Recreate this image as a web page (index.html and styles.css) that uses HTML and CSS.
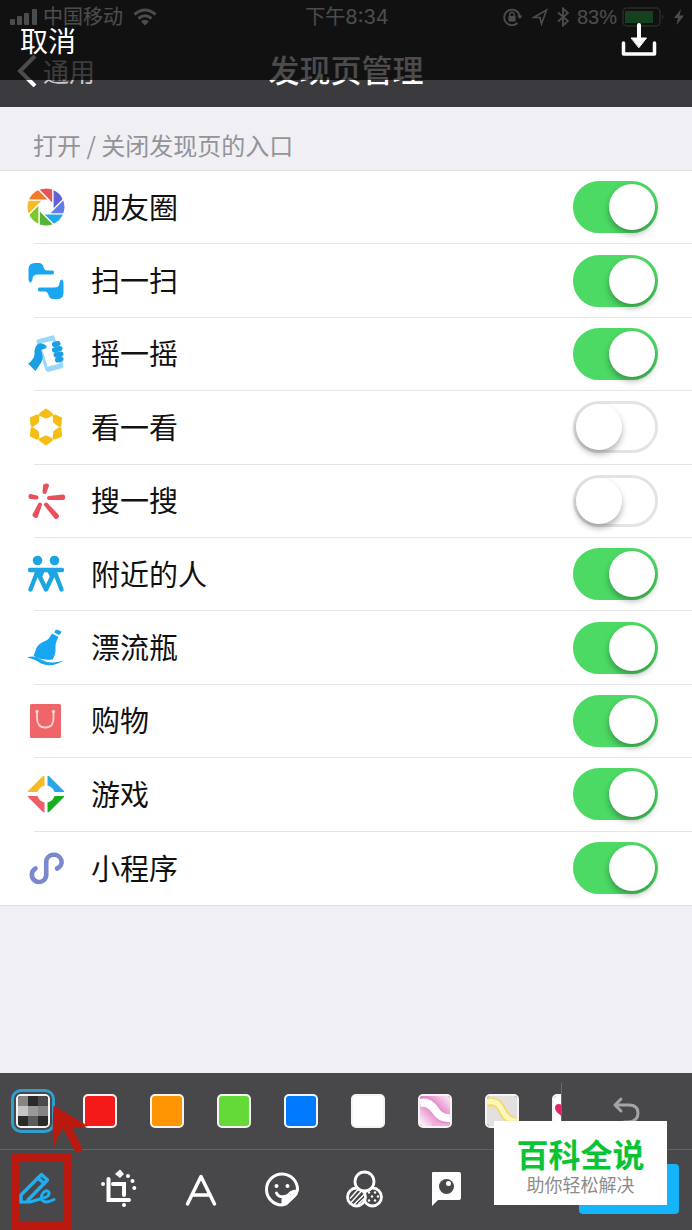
FILE: index.html
```html
<!DOCTYPE html>
<html lang="zh-CN">
<head>
    <meta charset="UTF-8">
    <meta name="viewport" content="width=device-width, initial-scale=1.0">
    <title>发现页管理</title>
    <link rel="stylesheet" href="styles.css">
</head>
<body>
    <header class="header">
        <!-- Status bar -->
        <div class="status">
            <div class="status-left">
                <svg width="27" height="18" viewBox="0 0 27 18" fill="#fff">
                    <rect x="0" y="11" width="5" height="6" rx="1"/>
                    <rect x="7" y="8" width="5" height="9" rx="1"/>
                    <rect x="14" y="5" width="5" height="12" rx="1"/>
                    <rect x="22" y="1" width="5" height="16" rx="1"/>
                </svg>
                <span>中国移动</span>
                <svg class="wifi" width="24" height="18" viewBox="0 0 24 18" fill="none" stroke="#fff" stroke-width="3">
                    <path d="M1.5 6.5Q12-2.500 22.500 6.500M5.500 10.500Q12 5 18.500 10.500"/>
                    <path d="M8 13.500Q12 10 16 13.500L12 17.500Z" fill="#fff" stroke="none"/>
                </svg>
            </div>
            <span class="time">下午8:34</span>
            <div class="status-right">
                <svg width="20" height="18" viewBox="0 0 20 18" fill="none" stroke="#fff" stroke-width="1.800">
                    <path d="M14.500 15A7.800 7.800 0 1 1 16.700 8"/>
                    <path d="M14 7.500h5.500L17 11Z" fill="#fff" stroke="none"/>
                    <rect x="5.500" y="8" width="7" height="5.500" fill="#fff" stroke="none"/>
                    <path d="M6.800 8V6.500a2.200 2.200 0 0 1 4.400 0V8" stroke-width="1.400"/>
                </svg>
                <svg width="16" height="18" viewBox="0 0 16 18" fill="none" stroke="#fff" stroke-width="1.600">
                    <path d="M1.500 9.500L14.500 2L9.500 16L8 9.500Z"/>
                </svg>
                <svg width="12" height="20" viewBox="0 0 12 20" fill="none" stroke="#fff" stroke-width="1.800">
                    <path d="M1 5.500L11 14L6 18.500V1.500L11 6L1 14.500"/>
                </svg>
                <span>83%</span>
                <svg width="43" height="20" viewBox="0 0 43 20">
                    <rect x="1" y="1" width="37" height="18" rx="4" fill="none" stroke="#8a8a8c" stroke-width="1.500"/>
                    <rect x="3" y="4" width="28" height="12" fill="#4cd964"/>
                    <path d="M40 7q3 3 0 6Z" fill="#8a8a8c"/>
                </svg>
                <svg width="10" height="18" viewBox="0 0 10 18" fill="#fff">
                    <path d="M7 1L0 10H4L2.500 17L10 7.500H5.500Z"/>
                </svg>
            </div>
        </div>

        <!-- Navigation bar -->
        <nav class="nav">
            <a href="#" class="back">
                <svg width="20" height="32" viewBox="0 0 20 32" fill="none" stroke="#fff" stroke-width="4">
                    <path d="M18 1L3 16L18 31"/>
                </svg>
                <span>通用</span>
            </a>
            <h1 class="title">发现页管理</h1>
        </nav>

        <!-- Editor bar over the header -->
        <div class="save-bar">
            <button type="button" class="cancel">取消</button>
            <button type="button" class="download" aria-label="保存">
                <svg width="36" height="34" viewBox="0 0 36 34" fill="none" stroke="#fff" stroke-width="3.500" stroke-linecap="round" stroke-linejoin="round">
                    <path d="M2.500 20V31H33.500V20"/>
                    <path d="M18 2V15" stroke-width="4"/>
                    <path d="M10.500 15H25.500L18 24.500Z" fill="#fff" stroke-width="1"/>
                </svg>
            </button>
        </div>
    </header>

    <main class="main">
        <h2 class="caption">打开 / 关闭发现页的入口</h2>
        <ul class="list">
            <li class="row">
                <svg class="icon" viewBox="0 0 40 40">
                    <g transform="translate(20 20)" stroke="#fff" stroke-width="1.200">
                        <path fill="#e9535a" d="M7-2.900V-17.700A19 19 0 0 0-7.600-17.500Z"/>
                        <path fill="#6463d2" transform="rotate(45)" d="M7-2.900V-17.700A19 19 0 0 0-7.600-17.500Z"/>
                        <path fill="#637de8" transform="rotate(90)" d="M7-2.900V-17.700A19 19 0 0 0-7.600-17.500Z"/>
                        <path fill="#21a8ee" transform="rotate(135)" d="M7-2.900V-17.700A19 19 0 0 0-7.600-17.500Z"/>
                        <path fill="#54b435" transform="rotate(180)" d="M7-2.900V-17.700A19 19 0 0 0-7.600-17.500Z"/>
                        <path fill="#80c72e" transform="rotate(225)" d="M7-2.900V-17.700A19 19 0 0 0-7.600-17.500Z"/>
                        <path fill="#f4bd27" transform="rotate(270)" d="M7-2.900V-17.700A19 19 0 0 0-7.600-17.500Z"/>
                        <path fill="#f07c2a" transform="rotate(315)" d="M7-2.900V-17.700A19 19 0 0 0-7.600-17.500Z"/>
                    </g>
                </svg>
                <label for="moments">朋友圈</label>
                <input type="checkbox" class="switch" id="moments" checked>
            </li>
            <li class="row">
                <svg class="icon" viewBox="0 0 40 40" fill="#1aa7f2">
                    <path d="M4.500 21.500Q2.500 21.500 2.500 17V8Q2.500 2 9 2H13Q16.500 2 17.500 6Q18.500 9.500 21 9.500H26.500Q28 9.500 28 11.500T26.500 13.500H12Q6.500 13.500 6.500 18Q6.500 21 4.500 21.500Z"/>
                    <path transform="rotate(180 20 20)" d="M4.500 21.500Q2.500 21.500 2.500 17V8Q2.500 2 9 2H13Q16.500 2 17.500 6Q18.500 9.500 21 9.500H26.500Q28 9.500 28 11.500T26.500 13.500H12Q6.500 13.500 6.500 18Q6.500 21 4.500 21.500Z"/>
                </svg>
                <label for="scan">扫一扫</label>
                <input type="checkbox" class="switch" id="scan" checked>
            </li>
            <li class="row">
                <svg class="icon" viewBox="0 0 40 40">
                    <path d="M12 7L27 3L36 32L21 36Z" fill="#fff" stroke="#9bd8f8" stroke-width="3" stroke-linejoin="round"/>
                    <path d="M12 5.500L27 1.500L29 6L13 10Z" fill="#9bd8f8"/>
                    <path d="M20 33L36 29L37 34L22 38Z" fill="#9bd8f8"/>
                    <path d="M2 29.500Q8 26 8.500 20Q8 13 12 10Q16 8 20.500 12Q21 14.500 17.500 15L15 16Q18 23 15.500 28Q13 32 9.500 37Z" fill="#1c9fe5"/>
                    <g stroke="#1c9fe5" stroke-width="5" stroke-linecap="round">
                        <path d="M28.500 10.500L32 9.500M28.500 16L34 14.500M30 21L35 20M31.500 26L35 25"/>
                    </g>
                </svg>
                <label for="shake">摇一摇</label>
                <input type="checkbox" class="switch" id="shake" checked>
            </li>
            <li class="row">
                <svg class="icon" viewBox="0 0 40 40">
                    <g transform="translate(20 20)" fill="#f5be16" stroke="#f5be16" stroke-width="2" stroke-linejoin="round">
                        <path d="M0-17.500L5.500-13.500Q6.500-12.500 5.500-12L0-9.500L-5.500-12Q-6.500-12.500-5.500-13.500Z"/>
                        <path transform="rotate(60)" d="M0-17.500L5.500-13.500Q6.500-12.500 5.500-12L0-9.500L-5.500-12Q-6.500-12.500-5.500-13.500Z"/>
                        <path transform="rotate(120)" d="M0-17.500L5.500-13.500Q6.500-12.500 5.500-12L0-9.500L-5.500-12Q-6.500-12.500-5.500-13.500Z"/>
                        <path transform="rotate(180)" d="M0-17.500L5.500-13.500Q6.500-12.500 5.500-12L0-9.500L-5.500-12Q-6.500-12.500-5.500-13.500Z"/>
                        <path transform="rotate(240)" d="M0-17.500L5.500-13.500Q6.500-12.500 5.500-12L0-9.500L-5.500-12Q-6.500-12.500-5.500-13.500Z"/>
                        <path transform="rotate(300)" d="M0-17.500L5.500-13.500Q6.500-12.500 5.500-12L0-9.500L-5.500-12Q-6.500-12.500-5.500-13.500Z"/>
                    </g>
                </svg>
                <label for="look">看一看</label>
                <input type="checkbox" class="switch" id="look">
            </li>
            <li class="row">
                <svg class="icon" viewBox="0 0 40 40" fill="#e8505b" stroke="#e8505b" stroke-width="4" stroke-linejoin="round">
                    <path d="M18.500 11L19 5L21 4.500Z"/>
                    <path d="M23 17L37 15.500V17Z"/>
                    <path d="M10.500 16.500L4.500 16V15Z"/>
                    <path d="M14 23.500L10 35L8.500 34Z"/>
                    <path d="M20 23.500L31 35L30 36Z"/>
                </svg>
                <label for="search">搜一搜</label>
                <input type="checkbox" class="switch" id="search">
            </li>
            <li class="row">
                <svg class="icon" viewBox="0 0 40 40" fill="#1da4e2">
                    <circle cx="11.500" cy="6.500" r="4.800"/>
                    <circle cx="28.500" cy="6.500" r="4.800"/>
                    <g fill="none" stroke="#1da4e2" stroke-width="4.400" stroke-linecap="round" stroke-linejoin="round">
                        <path d="M4 16H36"/>
                        <path d="M4.500 35.500L10.500 20M13.500 22L20 35.500L26.500 22M29.500 20L35.500 35.500"/>
                    </g>
                    <path d="M9 17H19L15 25L12 23L8 24Z"/>
                    <path d="M21 17H31L32 24L28 23L25 25Z"/>
                </svg>
                <label for="nearby">附近的人</label>
                <input type="checkbox" class="switch" id="nearby" checked>
            </li>
            <li class="row">
                <svg class="icon" viewBox="0 0 40 40" fill="#18a5f1">
                    <path d="M7.500 28L10.500 20Q12.500 15.500 18 13.500Q22.500 12 24.500 8L26 5.500L32.500 9L31 12Q29 16 29.500 20Q30 26 26.500 31.500Q18 33 7.500 28Z"/>
                    <path d="M29 2.500L31 1.500L35.500 3.500L34.500 6L32.500 7L28.500 4.500Z"/>
                    <path d="M1 29.500Q9 27 15 31.500Q24 37 37.500 32.500Q26 40 15 35.500Q9 31 1 29.500Z"/>
                </svg>
                <label for="bottle">漂流瓶</label>
                <input type="checkbox" class="switch" id="bottle" checked>
            </li>
            <li class="row">
                <svg class="icon" viewBox="0 0 40 40">
                    <rect x="4" y="3" width="31" height="34" rx="1.500" fill="#f0656a"/>
                    <path d="M11 11V17Q11 26.500 19.300 26.500T27.500 17V11" fill="none" stroke="#fbd5d5" stroke-width="1.800"/>
                    <circle cx="11" cy="10.500" r="1.700" fill="#fbd5d5"/>
                    <circle cx="27.500" cy="10.500" r="1.700" fill="#fbd5d5"/>
                </svg>
                <label for="shopping">购物</label>
                <input type="checkbox" class="switch" id="shopping" checked>
            </li>
            <li class="row">
                <svg class="icon" viewBox="0 0 40 40">
                    <g transform="translate(20 20)">
                        <path fill="#f5bb25" d="M-1.500-18V-8.500Q-7-7-8.500-2H-18Q-18.500-2.500-18-3L-3-18Q-2-18.500-1.500-18Z"/>
                        <path fill="#2aa5e8" transform="scale(-1 1)" d="M-1.500-18V-8.500Q-7-7-8.500-2H-18Q-18.500-2.500-18-3L-3-18Q-2-18.500-1.500-18Z"/>
                        <path fill="#ee5e66" transform="scale(1 -1)" d="M-1.500-18V-8.500Q-7-7-8.500-2H-18Q-18.500-2.500-18-3L-3-18Q-2-18.500-1.500-18Z"/>
                        <path fill="#17ae22" transform="scale(-1 -1)" d="M-1.500-18V-8.500Q-7-7-8.500-2H-18Q-18.500-2.500-18-3L-3-18Q-2-18.500-1.500-18Z"/>
                    </g>
                </svg>
                <label for="games">游戏</label>
                <input type="checkbox" class="switch" id="games" checked>
            </li>
            <li class="row">
                <svg class="icon" viewBox="0 0 40 40" fill="none" stroke="#7b88d0" stroke-width="4.600" stroke-linecap="round">
                    <path d="M9.500 20.500A7.200 7.200 0 1 0 20.200 27.500V14A7.700 7.200 0 1 1 31 20.500"/>
                </svg>
                <label for="mini">小程序</label>
                <input type="checkbox" class="switch" id="mini" checked>
            </li>
        </ul>
    </main>

    <footer class="editor">
        <div class="colors">
            <div class="swatches">
                <button type="button" class="swatch selected" aria-label="马赛克">
                    <svg viewBox="0 0 30 30">
                        <rect width="30" height="30" fill="#2a2a2a"/>
                        <path d="M0 0h10v10H0z" fill="#858585"/>
                        <path d="M20 0h10v10H20z" fill="#4a4a4a"/>
                        <path d="M0 10h10v10H0z" fill="#c4c4c4"/>
                        <path d="M10 10h10v10H10z" fill="#9a9a9a"/>
                        <path d="M20 10h10v10H20z" fill="#858585"/>
                        <path d="M10 20h10v10H10z" fill="#5c5c5c"/>
                    </svg>
                </button>
                <button type="button" class="swatch red" aria-label="红色"></button>
                <button type="button" class="swatch orange" aria-label="橙色"></button>
                <button type="button" class="swatch green" aria-label="绿色"></button>
                <button type="button" class="swatch blue" aria-label="蓝色"></button>
                <button type="button" class="swatch white" aria-label="白色"></button>
                <button type="button" class="swatch" aria-label="粉色丝带">
                    <svg viewBox="0 0 30 30">
                        <defs>
                            <linearGradient id="pink" x1="0" y1="1" x2="1" y2="0">
                                <stop offset="0" stop-color="#fff"/>
                                <stop offset="0.450" stop-color="#e58acb"/>
                                <stop offset="0.600" stop-color="#e58acb"/>
                                <stop offset="1" stop-color="#fdf0f9"/>
                            </linearGradient>
                        </defs>
                        <rect width="30" height="30" fill="url(#pink)"/>
                        <path d="M0 7Q9 5 15 14T30 22" fill="none" stroke="#fff" stroke-width="8"/>
                        <path d="M12 24Q18 29 30 27V30H12Z" fill="#eeb0dc"/>
                    </svg>
                </button>
                <button type="button" class="swatch" aria-label="黄色丝带">
                    <svg viewBox="0 0 30 30">
                        <rect width="30" height="30" fill="#e3e0e0"/>
                        <path d="M0 7Q10 3 15 14T30 26" fill="none" stroke="#f0dc72" stroke-width="9"/>
                        <path d="M0 6Q10 3 15 14T30 25" fill="none" stroke="#fdf6b8" stroke-width="5"/>
                    </svg>
                </button>
                <button type="button" class="swatch" aria-label="爱心">
                    <svg viewBox="0 0 30 30">
                        <rect width="30" height="30" fill="#fff"/>
                        <path d="M9 21Q1 16 1 12Q1 8 5 8Q8 8 9 11Q10 8 13 8Q17 8 17 12Q17 16 9 21Z" fill="#e0246d"/>
                    </svg>
                </button>
            </div>
            <button type="button" class="undo" aria-label="撤销">
                <svg width="30" height="30" viewBox="0 0 30 30" fill="none" stroke="#a4a4a5" stroke-width="3" stroke-linecap="round" stroke-linejoin="round">
                    <path d="M9 3L3 9L9 15"/>
                    <path d="M4 9H17Q26 9 26 17T17 26H12"/>
                </svg>
            </button>
        </div>

        <div class="tools">
            <button type="button" class="tool" aria-label="涂鸦">
                <svg viewBox="0 0 42 42" fill="none" stroke="#1eaef2" stroke-width="3.500" stroke-linecap="round" stroke-linejoin="round">
                    <path d="M5 34V27L25.500 6.500L31.500 12L12 32"/>
                    <path d="M22 10L28 15.500"/>
                    <path d="M5 34H14L24 31Q34 29 33 24.500Q32 21.500 28 24Q24 28 26 32Q29 36 38 31.500" stroke-width="3"/>
                </svg>
            </button>
            <button type="button" class="tool" aria-label="裁剪">
                <svg viewBox="0 0 42 42" fill="#fff" stroke="#fff">
                    <path d="M10.500 11V32H31" fill="none" stroke-width="4" stroke-linecap="round"/>
                    <path d="M15 16H26V27" fill="none" stroke-width="4" stroke-linecap="round"/>
                    <g stroke="none">
                        <path d="M17 6L22 1.500L26 6L22 10Z"/>
                        <circle cx="5" cy="16" r="2"/>
                        <circle cx="26" cy="37" r="2"/>
                        <circle cx="30" cy="8" r="2"/>
                        <circle cx="34.500" cy="13" r="2"/>
                        <circle cx="36.300" cy="20" r="2"/>
                    </g>
                </svg>
            </button>
            <button type="button" class="tool" aria-label="文字">
                <svg viewBox="0 0 42 42" fill="none" stroke="#fff" stroke-width="3.500" stroke-linecap="round" stroke-linejoin="round">
                    <path d="M7.500 36L21 8.500L34.500 36M12 27H30"/>
                </svg>
            </button>
            <button type="button" class="tool" aria-label="贴纸">
                <svg viewBox="0 0 42 42" fill="none" stroke="#fff" stroke-width="3">
                    <path d="M20 37A15.500 15.500 0 1 1 35.500 22L34 26L24 36Z"/>
                    <path d="M20 37V31Q21 27 25 27Q28 22 35.500 22Q36 26 33 29L25 36Z" fill="#fff" stroke-width="1"/>
                    <path d="M14.500 25Q17 30.500 25 28" stroke-linecap="round"/>
                    <circle cx="14.500" cy="18" r="2" fill="#fff" stroke="none"/>
                    <circle cx="25.500" cy="18" r="2" fill="#fff" stroke="none"/>
                </svg>
            </button>
            <button type="button" class="tool" aria-label="滤镜">
                <svg viewBox="0 0 42 42" fill="#48484a" stroke="#fff" stroke-width="2.800">
                    <circle cx="28.500" cy="29" r="9"/>
                    <g fill="#fff" stroke="none">
                        <circle cx="25" cy="24.500" r="1.200"/>
                        <circle cx="31" cy="24.500" r="1.200"/>
                        <circle cx="28" cy="28.500" r="1.200"/>
                        <circle cx="34" cy="28.500" r="1.200"/>
                        <circle cx="25" cy="32.500" r="1.200"/>
                        <circle cx="31" cy="32.500" r="1.200"/>
                    </g>
                    <circle cx="12.500" cy="29" r="9"/>
                    <path d="M6 30.500L14 21.500M7 34.500L18 22.500M10 36.500L20 26.500M14 36.500L20 30.500" stroke-width="1.400"/>
                    <circle cx="20.500" cy="13.500" r="9.500"/>
                </svg>
            </button>
            <button type="button" class="tool" aria-label="便签">
                <svg viewBox="0 0 42 42" fill="#fff">
                    <path d="M7 4H33Q35 4 35 6V30Q35 32 33 32H12L6 38V5Q6 4 7 4Z"/>
                    <circle cx="20.500" cy="18.500" r="7.500" fill="#48484a"/>
                    <circle cx="22.500" cy="15.500" r="2.500"/>
                </svg>
            </button>
            <button type="button" class="done" aria-label="完成"></button>
        </div>

        <!-- Red hints -->
        <div class="hint-box"></div>
        <svg class="hint-arrow" width="40" height="50" viewBox="0 0 40 50" fill="#b9190e">
            <path d="M1.500 0.500L36 21Q28 23 20 22L30 43Q29 48 23.500 47.500L11 23Q5 32 1.500 44Q0 20 1.500 0.500Z"/>
        </svg>

        <div class="brand">
            <strong>百科全说</strong>
            <span>助你轻松解决</span>
        </div>
    </footer>
</body>
</html>
```
FILE: styles.css
```css
* {
    box-sizing: border-box;
}

body {
    margin: 0;
    min-height: 100vh;
    display: flex;
    flex-direction: column;
    background: #efeff4;
    font-family: "Noto Sans CJK SC", sans-serif;
    color: #111;
}

button {
    padding: 0;
    border: 0;
    background: none;
    font-family: inherit;
    cursor: pointer;
}

svg {
    display: block;
    flex-shrink: 0;
}

/* Header */
.header {
    position: relative;
    background: #3b3a3e;
    color: #fff;
}

.status {
    display: grid;
    grid-template-columns: 1fr auto 1fr;
    align-items: center;
    height: 34px;
    padding: 0 8px 0 10px;
    font-family: "Inter", "Noto Sans CJK SC", sans-serif;
    font-size: 20px;
    line-height: 34px;
}

.status-left,
.status-right {
    display: flex;
    align-items: center;
    gap: 6px;
}

.wifi {
    margin-left: 4px;
}

.status-right {
    justify-content: flex-end;
}

.status-right svg + svg {
    margin-left: 3px;
}

.status-right span {
    margin: 0 -1px 0 2px;
    font-family: "Liberation Sans", sans-serif;
}

.nav {
    display: grid;
    grid-template-columns: 1fr auto 1fr;
    align-items: center;
    height: 73px;
    padding: 0 17px;
}

.back {
    display: flex;
    align-items: center;
    gap: 6px;
    color: #c8c8ca;
    font-size: 26px;
    line-height: 36px;
    text-decoration: none;
}

.title {
    margin: 0;
    padding-bottom: 4px;
    font-size: 31px;
    font-weight: 500;
    line-height: 40px;
}

.save-bar {
    position: absolute;
    top: 0;
    left: 0;
    right: 0;
    display: flex;
    justify-content: space-between;
    align-items: center;
    height: 80px;
    padding: 0 35px 0 20px;
    background: rgba(0, 0, 0, 0.7);
}

.cancel {
    color: #fff;
    font-size: 28px;
    line-height: 40px;
}

/* Settings list */
.main {
    flex: 1;
}

.caption {
    margin: 0;
    padding: 23px 33px 10px;
    color: #939398;
    font-size: 24px;
    font-weight: 400;
    line-height: 30px;
}

.list {
    display: grid;
    grid-auto-rows: 1fr;
    min-height: 736px;
    margin: 0;
    padding: 0;
    list-style: none;
    background: #fff;
    border-top: 1px solid #dfdfe3;
    border-bottom: 1px solid #dfdfe3;
}

.row {
    display: flex;
    align-items: center;
    margin-left: 34px;
    padding-right: 34px;
    border-bottom: 1px solid #e6e6e8;
}

.row:last-child {
    border-bottom: 0;
}

.icon {
    width: 40px;
    height: 40px;
    margin-left: -8px;
}

.row label {
    flex: 1;
    padding: 0 0 3px 25px;
    font-size: 29px;
    line-height: 40px;
}

/* Toggle switch */
.switch {
    appearance: none;
    display: flex;
    align-items: center;
    width: 85px;
    height: 52px;
    margin: 0;
    padding: 0;
    border: 3px solid #e4e4e6;
    border-radius: 26px;
    background: #fff;
    cursor: pointer;
}

.switch::before {
    content: "";
    width: 46px;
    height: 46px;
    border-radius: 50%;
    background: #fff;
    box-shadow: 0 4px 6px rgba(0, 0, 0, 0.3);
}

.switch:checked {
    justify-content: flex-end;
    border-color: #4cd964;
    background: #4cd964;
}

/* Editor toolbar */
.editor {
    position: relative;
    background: #48484a;
}

.colors {
    display: flex;
    height: 77px;
    border-bottom: 1px solid #626264;
}

.swatches {
    flex: 1;
    display: flex;
    align-items: center;
    gap: 33px;
    min-width: 0;
    padding-left: 16px;
    overflow: hidden;
}

.swatch {
    flex: none;
    width: 34px;
    height: 34px;
    border: 2px solid #f4f4f4;
    border-radius: 5px;
    overflow: hidden;
}

.swatch svg {
    width: 30px;
    height: 30px;
}

.selected {
    outline: 3px solid #2f9fd0;
    outline-offset: 2px;
}

.red {
    background: #f51a1a;
}

.orange {
    background: #ff9500;
}

.green {
    background: #64da38;
}

.blue {
    background: #007aff;
}

.white {
    background: #fff;
}

.undo {
    display: flex;
    justify-content: center;
    align-items: center;
    width: 131px;
    margin-top: 10px;
    padding-bottom: 10px;
    border-left: 1px solid #6b6b6d;
}

.tools {
    display: flex;
    align-items: center;
    gap: 40px;
    height: 80px;
    padding: 0 13px 3px 16px;
}

.tool svg {
    width: 42px;
    height: 42px;
}

.done {
    width: 100px;
    height: 50px;
    margin-left: auto;
    border-radius: 4px;
    background: #14b4fa;
}

/* Hints and brand card lie over the toolbar */
.hint-box {
    position: absolute;
    left: 11px;
    bottom: 0;
    width: 61px;
    height: 76px;
    border: 8px solid #b9190e;
    pointer-events: none;
}

.hint-arrow {
    position: absolute;
    left: 52px;
    top: 32px;
    pointer-events: none;
}

.brand {
    position: absolute;
    right: 25px;
    bottom: 25px;
    display: flex;
    flex-direction: column;
    align-items: center;
    width: 173px;
    height: 84px;
    padding-top: 13px;
    background: #fff;
}

.brand strong {
    color: #0bc436;
    font-size: 32px;
    font-weight: 700;
    line-height: 38px;
}

.brand span {
    color: #8c8c8c;
    font-size: 18px;
    line-height: 24px;
}
```
